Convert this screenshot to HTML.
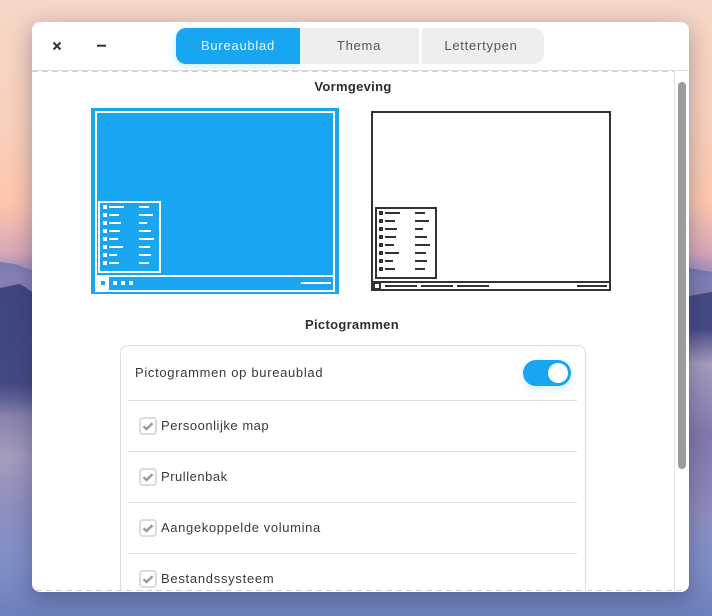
<!DOCTYPE html>
<html>
<head>
<meta charset="utf-8">
<style>
html,body{margin:0;padding:0}
body{width:712px;height:616px;overflow:hidden;position:relative;font-family:"Liberation Sans",sans-serif;color:#333;
background:#6d7fbb}
.a{position:absolute}
#win{left:32px;top:22px;width:657px;height:570px;background:#fff;border-radius:8px;box-shadow:0 6px 22px rgba(30,40,80,.38);overflow:hidden}
.tab{position:absolute;box-sizing:border-box;top:28px;height:36px;line-height:35px;text-align:center;font-size:13px;letter-spacing:.75px;background:#eee;color:#555}
.lbl{position:absolute;font-size:13px;letter-spacing:.72px;color:#3a3a3a;line-height:16px;white-space:nowrap}
.h{position:absolute;font-size:13px;font-weight:bold;letter-spacing:.3px;color:#2e2e2e;line-height:16px;white-space:nowrap;text-align:center}
.sep{position:absolute;left:128px;width:449px;height:1px;background:#e0e0e0}
.cb{position:absolute;left:139px;width:14px;height:14px;border:2px solid #dcdcdc;border-radius:4px;background:#fff}
</style>
</head>
<body>
<svg class="a" style="left:0;top:0" width="712" height="616" viewBox="0 0 712 616">
<defs>
<linearGradient id="bg" x1="0" y1="0" x2="0" y2="1">
<stop offset="0" stop-color="#f5d6c7"/>
<stop offset=".2" stop-color="#f9d0bc"/>
<stop offset=".33" stop-color="#fdc6ac"/>
<stop offset=".41" stop-color="#d9a7b8"/>
<stop offset=".43" stop-color="#b197ba"/>
<stop offset=".5" stop-color="#6f70a8"/>
<stop offset=".6" stop-color="#5f6298"/>
<stop offset=".68" stop-color="#8a84ae"/>
<stop offset=".74" stop-color="#a79bbd"/>
<stop offset=".82" stop-color="#8f8fc0"/>
<stop offset=".92" stop-color="#7f8ec6"/>
<stop offset="1" stop-color="#6c7fbb"/>
</linearGradient>
<linearGradient id="mt" x1="0" y1="0" x2="0" y2="1">
<stop offset="0" stop-color="#3f4680"/>
<stop offset=".75" stop-color="#434a82"/>
<stop offset="1" stop-color="#434a82" stop-opacity="0"/>
</linearGradient>
<linearGradient id="mt2" x1="0" y1="0" x2="0" y2="1">
<stop offset="0" stop-color="#7478b2"/>
<stop offset="1" stop-color="#7478b2" stop-opacity="0"/>
</linearGradient>
<linearGradient id="rs" x1="0" y1="0" x2="0" y2="1">
<stop offset="0" stop-color="#4a4f88"/>
<stop offset=".18" stop-color="#a79bbd"/>
<stop offset=".55" stop-color="#8577ad"/>
<stop offset=".85" stop-color="#8a85b8"/>
<stop offset="1" stop-color="#8f8fc0"/>
</linearGradient>
</defs>
<rect width="712" height="616" fill="url(#bg)"/>
<path d="M0 262L15 264L32 270L32 300L0 300Z" fill="url(#mt2)"/>
<path d="M0 288L14 285L20 284L25 287L32 292L32 415L0 415Z" fill="url(#mt)"/>
<path d="M689 268L712 272L712 310L689 310Z" fill="url(#mt2)"/>
<path d="M689 296L712 292L712 330L689 330Z" fill="#444a83"/>
<rect x="689" y="330" width="23" height="190" fill="url(#rs)"/>
</svg>

<div id="win" class="a"></div>

<!-- header controls -->
<svg class="a" style="left:50px;top:38px" width="60" height="16" viewBox="0 0 60 16">
<path d="M3.5 4.5L10.5 11.5M10.5 4.5L3.5 11.5" stroke="#333" stroke-width="2" fill="none"/>
<rect x="47" y="6.7" width="9" height="2" fill="#333"/>
</svg>

<!-- tabs -->
<div class="a" style="left:176px;top:28px;width:124px;height:36px;border-radius:10px 0 0 10px;background:#18a5f2;box-shadow:0 2px 8px rgba(24,165,242,.25);color:#e8f7ff;text-align:center;line-height:35px;font-size:13px;letter-spacing:.75px">Bureaublad</div>
<div class="tab" style="left:301px;width:118px;padding-right:2px">Thema</div>
<div class="tab" style="left:422px;width:122px;border-radius:0 10px 10px 0;padding-right:4px">Lettertypen</div>

<!-- header border -->
<div class="a" style="left:32px;top:70px;width:657px;height:1px;background:#dcdcdc"></div>
<div class="a" style="left:32px;top:71px;width:642px;height:1px;background:repeating-linear-gradient(90deg,#cfcfcf 0 6px,#fff 6px 10px)"></div>

<!-- scrollbar -->
<div class="a" style="left:674px;top:72px;width:1px;height:520px;background:#e4e4e4"></div>
<div class="a" style="left:678px;top:82px;width:8px;height:387px;border-radius:4px;background:#9b9b9b"></div>

<div class="h" style="left:253px;top:79px;width:200px">Vormgeving</div>

<!-- blue thumbnail -->
<svg class="a" style="left:91px;top:108px" width="248" height="186" viewBox="91 108 248 186" shape-rendering="crispEdges">
<rect x="91" y="108" width="248" height="186" fill="#18a5f2"/>
<rect x="96" y="112" width="238" height="179" fill="none" stroke="#fff" stroke-width="2"/>
<rect x="96" y="275" width="238" height="2" fill="#fff"/>
<rect x="95" y="276" width="14" height="15" fill="#fff"/>
<rect x="101" y="281" width="4" height="4" fill="#18a5f2"/>
<g fill="#fff">
<rect x="113" y="281" width="4" height="4"/><rect x="121" y="281" width="4" height="4"/><rect x="129" y="281" width="4" height="4"/>
<rect x="301" y="282" width="30" height="2"/>
</g>
<rect x="99" y="202" width="61" height="70" fill="#18a5f2" stroke="#fff" stroke-width="2"/>
<g fill="#fff">
<rect x="103" y="205" width="4" height="4"/><rect x="109" y="206" width="15" height="2"/><rect x="139" y="206" width="10" height="2"/>
<rect x="103" y="213" width="4" height="4"/><rect x="109" y="214" width="10" height="2"/><rect x="139" y="214" width="14" height="2"/>
<rect x="103" y="221" width="4" height="4"/><rect x="109" y="222" width="12" height="2"/><rect x="139" y="222" width="8" height="2"/>
<rect x="103" y="229" width="4" height="4"/><rect x="109" y="230" width="11" height="2"/><rect x="139" y="230" width="12" height="2"/>
<rect x="103" y="237" width="4" height="4"/><rect x="109" y="238" width="9" height="2"/><rect x="139" y="238" width="15" height="2"/>
<rect x="103" y="245" width="4" height="4"/><rect x="109" y="246" width="14" height="2"/><rect x="139" y="246" width="11" height="2"/>
<rect x="103" y="253" width="4" height="4"/><rect x="109" y="254" width="8" height="2"/><rect x="139" y="254" width="12" height="2"/>
<rect x="103" y="261" width="4" height="4"/><rect x="109" y="262" width="10" height="2"/><rect x="139" y="262" width="10" height="2"/>
</g>
</svg>

<!-- plain thumbnail -->
<svg class="a" style="left:371px;top:111px" width="240" height="180" viewBox="371 111 240 180" shape-rendering="crispEdges">
<rect x="372" y="112" width="238" height="178" fill="#fff" stroke="#333" stroke-width="2"/>
<rect x="372" y="281" width="238" height="2" fill="#333"/>
<rect x="371" y="282" width="10" height="9" fill="#333"/>
<rect x="375" y="284" width="4" height="4" fill="#fff"/>
<g fill="#333">
<rect x="385" y="285" width="32" height="2"/><rect x="421" y="285" width="32" height="2"/><rect x="457" y="285" width="32" height="2"/><rect x="577" y="285" width="30" height="2"/>
</g>
<rect x="376" y="208" width="60" height="70" fill="#fff" stroke="#333" stroke-width="2"/>
<g fill="#333">
<rect x="379" y="211" width="4" height="4"/><rect x="385" y="212" width="15" height="2"/><rect x="415" y="212" width="10" height="2"/>
<rect x="379" y="219" width="4" height="4"/><rect x="385" y="220" width="10" height="2"/><rect x="415" y="220" width="14" height="2"/>
<rect x="379" y="227" width="4" height="4"/><rect x="385" y="228" width="12" height="2"/><rect x="415" y="228" width="8" height="2"/>
<rect x="379" y="235" width="4" height="4"/><rect x="385" y="236" width="11" height="2"/><rect x="415" y="236" width="12" height="2"/>
<rect x="379" y="243" width="4" height="4"/><rect x="385" y="244" width="9" height="2"/><rect x="415" y="244" width="15" height="2"/>
<rect x="379" y="251" width="4" height="4"/><rect x="385" y="252" width="14" height="2"/><rect x="415" y="252" width="11" height="2"/>
<rect x="379" y="259" width="4" height="4"/><rect x="385" y="260" width="8" height="2"/><rect x="415" y="260" width="12" height="2"/>
<rect x="379" y="267" width="4" height="4"/><rect x="385" y="268" width="10" height="2"/><rect x="415" y="268" width="10" height="2"/>
</g>
</svg>

<div class="h" style="left:252px;top:317px;width:200px">Pictogrammen</div>

<!-- card -->
<div class="a" style="left:120px;top:345px;width:464px;height:245px;border:1px solid #ddd;border-bottom:0;border-radius:8px 8px 0 0"></div>
<div class="lbl" style="left:135px;top:365px;letter-spacing:.68px">Pictogrammen op bureaublad</div>
<div class="a" style="left:523px;top:360px;width:48px;height:26px;border-radius:13px;background:#18a5f2;box-shadow:0 3px 8px rgba(24,165,242,.2)"></div>
<div class="a" style="left:548px;top:363px;width:20px;height:20px;border-radius:50%;background:#fff"></div>

<div class="sep" style="top:400px"></div>
<div class="sep" style="top:451px"></div>
<div class="sep" style="top:502px"></div>
<div class="sep" style="top:553px"></div>

<div class="cb" style="top:417px"><svg width="14" height="14" viewBox="0 0 14 14" style="display:block"><path d="M2.5 7.2L5.5 10L11.5 4.2" stroke="#999" stroke-width="2.4" fill="none"/></svg></div>
<div class="lbl" style="left:161px;top:418px;letter-spacing:.53px">Persoonlijke map</div>
<div class="cb" style="top:468px"><svg width="14" height="14" viewBox="0 0 14 14" style="display:block"><path d="M2.5 7.2L5.5 10L11.5 4.2" stroke="#999" stroke-width="2.4" fill="none"/></svg></div>
<div class="lbl" style="left:161px;top:469px;letter-spacing:.52px">Prullenbak</div>
<div class="cb" style="top:519px"><svg width="14" height="14" viewBox="0 0 14 14" style="display:block"><path d="M2.5 7.2L5.5 10L11.5 4.2" stroke="#999" stroke-width="2.4" fill="none"/></svg></div>
<div class="lbl" style="left:161px;top:520px;letter-spacing:.63px">Aangekoppelde volumina</div>
<div class="cb" style="top:570px"><svg width="14" height="14" viewBox="0 0 14 14" style="display:block"><path d="M2.5 7.2L5.5 10L11.5 4.2" stroke="#999" stroke-width="2.4" fill="none"/></svg></div>
<div class="lbl" style="left:161px;top:571px">Bestandssysteem</div>

<!-- bottom dashes -->
<div class="a" style="left:36px;top:590px;width:649px;height:1px;background:repeating-linear-gradient(90deg,#cfcfcf 0 6px,#fff 6px 10px)"></div>
</body>
</html>
